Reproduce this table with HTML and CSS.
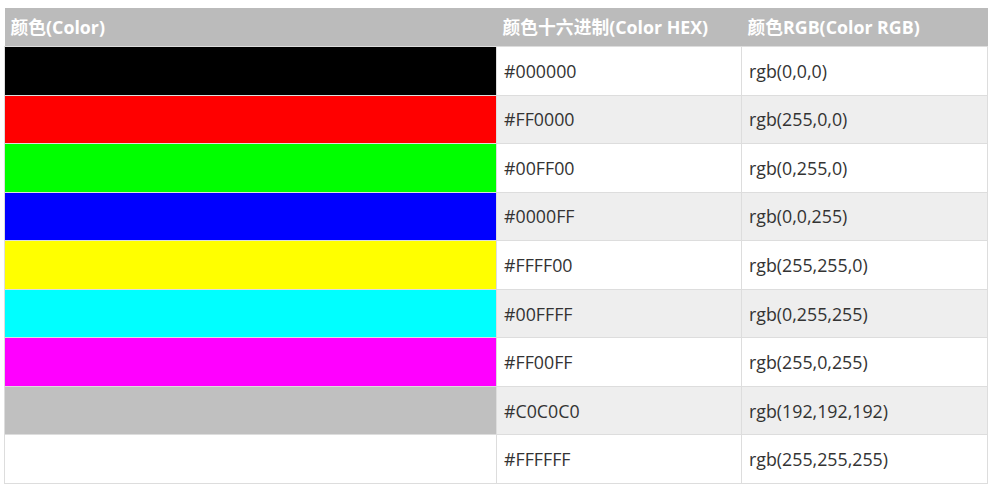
FILE: index.html
```html
<!DOCTYPE html>
<html lang="zh">
<head>
<meta charset="utf-8">
<link rel="stylesheet" href="styles.css">
</head>
<body>
<table class="colors">
  <thead>
    <tr>
      <th class="c1">颜色(Color)</th>
      <th class="c2">颜色十六进制(Color HEX)</th>
      <th class="c3">颜色RGB(Color RGB)</th>
    </tr>
  </thead>
  <tbody>
    <tr><td style="background:#000000"></td><td>#000000</td><td>rgb(0,0,0)</td></tr>
    <tr><td style="background:#FF0000"></td><td>#FF0000</td><td>rgb(255,0,0)</td></tr>
    <tr><td style="background:#00FF00"></td><td>#00FF00</td><td>rgb(0,255,0)</td></tr>
    <tr><td style="background:#0000FF"></td><td>#0000FF</td><td>rgb(0,0,255)</td></tr>
    <tr><td style="background:#FFFF00"></td><td>#FFFF00</td><td>rgb(255,255,0)</td></tr>
    <tr><td style="background:#00FFFF"></td><td>#00FFFF</td><td>rgb(0,255,255)</td></tr>
    <tr><td style="background:#FF00FF"></td><td>#FF00FF</td><td>rgb(255,0,255)</td></tr>
    <tr><td style="background:#C0C0C0"></td><td>#C0C0C0</td><td>rgb(192,192,192)</td></tr>
    <tr><td style="background:#FFFFFF"></td><td>#FFFFFF</td><td>rgb(255,255,255)</td></tr>
  </tbody>
</table>
</body>
</html>
```

FILE: styles.css
```css
html, body {
  margin: 0;
  padding: 0;
  background: #fff;
}
body {
  padding: 8px 0 0 4px;
  font-family: "Open Sans", "Noto Sans CJK SC", sans-serif;
  font-size: 17.8px;
  color: #333;
}
.colors {
  border-collapse: collapse;
  width: 984px;
  table-layout: fixed;
}
.colors th {
  background: #bbbbbb;
  color: #fff;
  font-weight: bold;
  text-align: left;
  height: 38px;
  padding: 0 6px;
  line-height: 38px;
  white-space: nowrap;
  border-bottom: 1px solid #ddd;
}
.colors th.c1 { width: 480px; }
.colors th.c2 { width: 233px; }
.colors td {
  border: 1px solid #ddd;
  height: 47.56px;
  padding: 0 7px;
  line-height: 20px;
  background: #fff;
}
.colors tbody tr:nth-child(even) td {
  background: #eeeeee;
}
```
